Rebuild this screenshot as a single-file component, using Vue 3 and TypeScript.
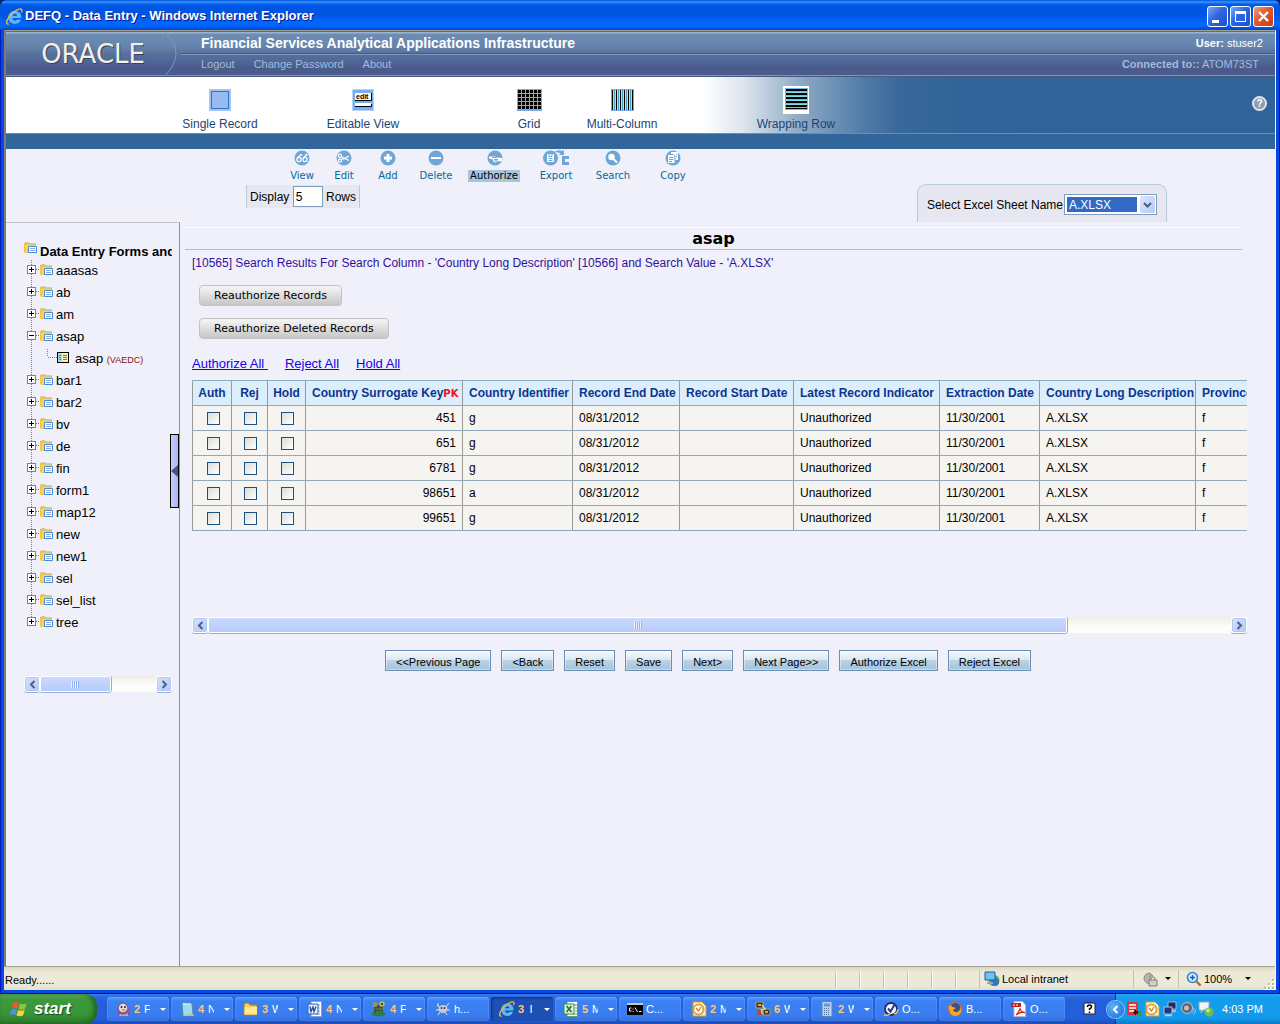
<script setup lang="ts">
import { ref } from 'vue'

interface NavItem { label: string; icon: string }
interface Tool { label: string; icon: string; active?: boolean }
interface Row { key: string; id: string; end: string; start: string; status: string; extracted: string; description: string; province: string }
interface Task { icon: string; count?: string; text: string; active?: boolean }
interface TreeNode { name: string; child?: string; access?: string }

const navItems: NavItem[] = [
  { label: 'Single Record', icon: 'nav-single' },
  { label: 'Editable View', icon: 'nav-edit' },
  { label: 'Grid', icon: 'nav-grid' },
  { label: 'Multi-Column', icon: 'nav-columns' },
  { label: 'Wrapping Row', icon: 'nav-rows' },
]

const tools: Tool[] = [
  { label: 'View', icon: 'tool-view' },
  { label: 'Edit', icon: 'tool-edit' },
  { label: 'Add', icon: 'tool-add' },
  { label: 'Delete', icon: 'tool-delete' },
  { label: 'Authorize', icon: 'tool-authorize', active: true },
  { label: 'Export', icon: 'tool-export' },
  { label: 'Search', icon: 'tool-search' },
  { label: 'Copy', icon: 'tool-copy' },
]

const tree: TreeNode[] = [
  { name: 'aaasas' }, { name: 'ab' }, { name: 'am' },
  { name: 'asap', child: 'asap', access: '(VAEDC)' },
  { name: 'bar1' }, { name: 'bar2' }, { name: 'bv' }, { name: 'de' }, { name: 'fin' }, { name: 'form1' },
  { name: 'map12' }, { name: 'new' }, { name: 'new1' }, { name: 'sel' }, { name: 'sel_list' }, { name: 'tree' },
]

const columnWidths = [39, 36, 38, 157, 110, 107, 114, 146, 100, 156, 110]
const marks = ['Auth', 'Rej', 'Hold']
const headers = [
  'Country Identifier', 'Record End Date', 'Record Start Date', 'Latest Record Indicator',
  'Extraction Date', 'Country Long Description', 'Province',
]

const makeRow = (key: string, id: string): Row => ({
  key, id, end: '08/31/2012', start: '', status: 'Unauthorized',
  extracted: '11/30/2001', description: 'A.XLSX', province: 'f',
})
const rows: Row[] = [makeRow('451', 'g'), makeRow('651', 'g'), makeRow('6781', 'g'), makeRow('98651', 'a'), makeRow('99651', 'g')]

const actions = ['<<Previous Page', '<Back', 'Reset', 'Save', 'Next>', 'Next Page>>', 'Authorize Excel', 'Reject Excel']

const tasks: Task[] = [
  { icon: 'app-pidgin', count: '2', text: 'F' },
  { icon: 'app-notes', count: '4', text: 'N' },
  { icon: 'app-folder', count: '3', text: 'W' },
  { icon: 'app-word', count: '4', text: 'N' },
  { icon: 'app-toad', count: '4', text: 'F' },
  { icon: 'app-bug', text: 'h...' },
  { icon: 'app-ie', count: '3', text: 'I', active: true },
  { icon: 'app-excel', count: '5', text: 'M' },
  { icon: 'app-cmd', text: 'C...' },
  { icon: 'app-outlook', count: '2', text: 'M' },
  { icon: 'app-putty', count: '6', text: 'W' },
  { icon: 'app-calc', count: '2', text: 'W' },
  { icon: 'app-check', text: 'O...' },
  { icon: 'app-firefox', text: 'B...' },
  { icon: 'app-pdf', text: 'O...' },
]
const tray = ['tray-db', 'app-outlook', 'tray-net', 'tray-sound', 'tray-chat']

const rowCount = ref('5')
const sheet = ref('A.XLSX')
</script>

<template>
  <svg class="sprite" aria-hidden="true">
    <symbol id="nav-single" viewBox="0 0 22 22"><rect width="22" height="22" fill="#a5c6f2" /><rect x="2.500" y="2.500" width="17" height="17" fill="#9abbef" stroke="#2a72cc" /></symbol>
    <symbol id="nav-edit" viewBox="0 0 22 22"><rect width="22" height="22" fill="#b7d3fa" /><rect x="1" y="1" width="20" height="20" fill="#79acf2" /><path d="M3 4h16v8H3z" fill="#fff" /><path d="M3 11.500h16.500V4" fill="none" stroke="#000" /><text x="4" y="10" font-family="Liberation Sans" font-size="7" font-weight="bold" fill="#000">edit</text><path d="M3 14h16v3H3z" fill="#fff" /><path d="M3 17.500h16.500V15" stroke="#000" fill="none" /></symbol>
    <symbol id="nav-grid" viewBox="0 0 25 22"><rect width="25" height="22" fill="#78aaf0" /><path d="M1 2.500h23M1 6.500h23M1 10.500h23M1 14.500h23M1 18.500h23" stroke="#000" stroke-width="3" stroke-dasharray="3 1" /></symbol>
    <symbol id="nav-columns" viewBox="0 0 23 22"><rect width="23" height="22" fill="#78aaf0" /><rect x="1" y="1" width="21" height="20" fill="#8ff0f4" /><path d="M1.500 1v20M5.500 1v20M9.500 1v20M13.500 1v20M17.500 1v20M21.500 1v20" stroke="#000" /><path d="M3.500 1v20M7.500 1v20M11.500 1v20M15.500 1v20M19.500 1v20" stroke="#4b9fc0" /></symbol>
    <symbol id="nav-rows" viewBox="0 0 26 28"><rect width="26" height="28" fill="#fff" /><rect x="2" y="2" width="23" height="22" fill="#78b4f0" /><path d="M3 4h21M3 8h21M3 12h21M3 16h21M3 20h21" stroke="#000" stroke-width="2" /><path d="M3 22.500h21" stroke="#000" /><path d="M3 6.500h21M3 10.500h21M3 14.500h21M3 18.500h21" stroke="#79e0f2" /></symbol>

    <symbol id="tool-view" viewBox="0 0 28 16"><circle cx="14" cy="8" r="7.500" fill="#6fa6d6" /><g fill="none" stroke="#fff" stroke-width="1.200"><circle cx="11" cy="9.500" r="2.200" /><circle cx="17" cy="9.500" r="2.200" /><path d="M9 8.500l4-4 1 1M15.500 8l3-3.500 1 1" /></g></symbol>
    <symbol id="tool-edit" viewBox="0 0 28 16"><circle cx="14" cy="8" r="7.500" fill="#6fa6d6" /><g fill="none" stroke="#fff" stroke-width="1.200"><circle cx="10" cy="5.800" r="1.600" /><circle cx="10" cy="10.500" r="1.600" /><path d="M11.500 6.500l3 2 4.500-2.500M11.500 9.800l3-1.600 4.500 2.300" /></g></symbol>
    <symbol id="tool-add" viewBox="0 0 28 16"><circle cx="14" cy="8" r="7.500" fill="#6fa6d6" /><path d="M14 4v8M10 8h8" stroke="#fff" stroke-width="3" /></symbol>
    <symbol id="tool-delete" viewBox="0 0 28 16"><circle cx="14" cy="8" r="7.500" fill="#6fa6d6" /><path d="M9 8h10" stroke="#fff" stroke-width="2" /></symbol>
    <symbol id="tool-authorize" viewBox="0 0 28 16"><circle cx="15" cy="8" r="7.500" fill="#6fa6d6" /><path d="M9 6.500h6l3 1 4 .5v3l-4 .5-3 1-2-1v-2l-4-1z" fill="#fff" /><path d="M12 7.500h5M14 9.500h4M14 11h4" stroke="#6fa6d6" /></symbol>
    <symbol id="tool-export" viewBox="0 0 28 16"><circle cx="8.500" cy="8" r="7.500" fill="#6fa6d6" /><path d="M5 4h7v8H5z" fill="#fff" /><path d="M7 4v2.500h3V4M6.500 8.500h4M6.500 10.500h4" stroke="#6fa6d6" fill="none" /><path d="M12 2q5-3 8-1l2-1v5h-5l1.500-1.500Q16 1.500 12 2z" fill="#6fa6d6" /><path d="M20 6h7v3h-4v3h4v3h-7z" fill="#6fa6d6" /></symbol>
    <symbol id="tool-search" viewBox="0 0 28 16"><circle cx="14" cy="8" r="7.500" fill="#6fa6d6" /><circle cx="12.500" cy="7" r="3.200" fill="#fff" /><path d="M14.500 9l3.500 3.500" stroke="#fff" stroke-width="2" /></symbol>
    <symbol id="tool-copy" viewBox="0 0 28 16"><circle cx="14" cy="8" r="7.500" fill="#6fa6d6" /><path d="M12 2h7v8h-7z" fill="#fff" /><path d="M8.500 4.500h6l1.500 1.500v7.500H8.500z" fill="#fff" stroke="#6fa6d6" /><path d="M10 7.500h4.500M10 9.500h4.500M10 11.500h3M17 4.500h1M17 6.500h1" stroke="#6fa6d6" /></symbol>

    <symbol id="folder" viewBox="0 0 14 12"><path d="M0 10V2l1-1.500h3.500l1 1H12V11H1z" fill="#f7c744" /><path d="M.5 2.500L1 1h4l1 1h6" fill="none" stroke="#c0b8a8" /><path d="M2 3h9v7H2z" fill="#fbd55b" /><path d="M4.500 4.500h8v6h-8z" fill="#fff" stroke="#3d8ad8" /><path d="M6 6.500h5M6 8.500h5" stroke="#8fa8d8" /></symbol>

    <symbol id="app-ie" viewBox="0 0 16 16"><path d="M14 10.800H10.300Q9.800 12 8.300 12 6 11.800 6 9.500H14.500Q14.800 3 8.500 2.500 2.500 3 2 8.800 2.500 14.800 8.300 15 12.800 14.800 14 10.800ZM6 7.200Q6.400 5.300 8.300 5.300 10.200 5.400 10.500 7.200Z" fill="#5ab8f4" /><path d="M2.500 15.300Q-1.500 15 2.800 8.500 8 2 13 .8q3-.2 1.500 3.500" fill="none" stroke="#f2b632" stroke-width="1.300" /></symbol>
    <symbol id="app-pidgin" viewBox="0 0 16 16"><path d="M3 14Q1 3 6.500 1.500 13 1 14 8l1 6z" fill="#7d5d92" /><circle cx="8" cy="7" r="4.200" fill="#e6d9e6" /><circle cx="6.500" cy="6" r="1" fill="#222" /><circle cx="10" cy="6" r="1" fill="#222" /><path d="M6 8h5l-2.500 3z" fill="#f09a28" /><path d="M5 13q4 2 8-1v3H4z" fill="#c9a7a0" /></symbol>
    <symbol id="app-notes" viewBox="0 0 16 16"><path d="M3 1.500l10 1 1 11-10 1.500z" fill="#9bdcf0" stroke="#4c8bb4" /><path d="M4 3h8" stroke="#e8f8ff" /><path d="M4 14l10-1 1 2H5z" fill="#e2c05c" /></symbol>
    <symbol id="app-folder" viewBox="0 0 16 16"><path d="M1 4l1-2h4l1 2h7v10H1z" fill="#f5cf59" stroke="#a97a16" /><path d="M1.500 6h12.500v7.500H1.500z" fill="#ffe794" /></symbol>
    <symbol id="app-word" viewBox="0 0 16 16"><path d="M4 .5h10.500v15H4z" fill="#fff" stroke="#7ba0dc" /><path d="M10 4h3M11 7h2M11 10h2M9 13h4" stroke="#7ba0dc" /><path d="M1 3h10v10H1z" fill="#e6eefb" stroke="#2b5fb8" /><path d="M3 5.500l1 5 2-4.500 1 4.500 2-5" stroke="#1d4a9c" stroke-width="1.300" fill="none" /></symbol>
    <symbol id="app-toad" viewBox="0 0 16 16"><ellipse cx="7.500" cy="13" rx="7" ry="2.500" fill="#158c36" /><path d="M3 4h9v8H3z" fill="#4a4d35" /><circle cx="4" cy="3.500" r="2.500" fill="#9a9658" /><circle cx="11" cy="3" r="2.800" fill="#b8bb57" /><circle cx="11" cy="3" r="1" fill="#223" /><path d="M4 8h8M5 11h6" stroke="#32a14e" /></symbol>
    <symbol id="app-bug" viewBox="0 0 16 16"><ellipse cx="8" cy="8" rx="4.500" ry="4" fill="#c5c9d6" /><path d="M2 4l3 3M14 2l-3 4M1 9h4M12 9h3M5 11l-2 3M10 11l2 3M3 2v3" stroke="#e2e4ed" /><circle cx="6.500" cy="7" r="1" fill="#444" /><circle cx="9.500" cy="7" r="1" fill="#444" /></symbol>
    <symbol id="app-excel" viewBox="0 0 16 16"><path d="M4 .5h10.500v15H4z" fill="#fff" stroke="#5da15d" /><path d="M11 4h3M12 7h2M12 10h2M9 13h5" stroke="#5da15d" /><path d="M1 3h10v10H1z" fill="#e9f6e6" stroke="#2c8a3c" /><path d="M3.500 5l5 6M8.500 5l-5 6" stroke="#237a32" stroke-width="1.800" /></symbol>
    <symbol id="app-cmd" viewBox="0 0 16 16"><path d="M0 2h16v12H0z" fill="#000" /><path d="M0 2h16v2H0z" fill="#c8c8d0" /><path d="M4.500 7H2.500v3h2M6 7.500v1M6 10v.8M8 6.500l2.500 4.500M12 10.500h2.500" stroke="#fff" fill="none" /></symbol>
    <symbol id="app-outlook" viewBox="0 0 16 16"><path d="M2 1h9l4 4v10H2z" fill="#fff3cf" stroke="#d89a2a" /><circle cx="7.500" cy="8.500" r="5" fill="#fff" stroke="#e6a22c" stroke-width="2" /><path d="M5 7l2.500 3L10 6" fill="none" stroke="#c77e1a" stroke-width="1.300" /></symbol>
    <symbol id="app-putty" viewBox="0 0 16 16"><path d="M1 1h7v6H1zM8 8h7v6H8z" fill="#3b3b35" stroke="#9e9e8e" /><path d="M3 3h3v2H3zM10 10h3v2h-3z" fill="#e3a13e" /><path d="M7 4l3 4-4 1 2 4" fill="none" stroke="#f3d34a" stroke-width="1.500" /><path d="M2 9h4v5H2z" fill="#b64a35" /></symbol>
    <symbol id="app-calc" viewBox="0 0 16 16"><path d="M3 .5h10v15H3z" fill="#b9d3ee" stroke="#5c82b4" /><path d="M5 2.500h6v3H5z" fill="#5f97d8" /><path d="M5 7.500h6M5 9.500h6M5 11.500h6M5 13.500h6" stroke="#50739c" stroke-dasharray="1 1" /></symbol>
    <symbol id="app-check" viewBox="0 0 16 16"><circle cx="8" cy="8" r="6" fill="#f3f3f8" stroke="#25306e" stroke-width="1.800" /><path d="M5 7.500l2.500 3L12 3" fill="none" stroke="#24398f" stroke-width="2" /><path d="M1 14q4 1 6-1M11 13q4-1 4-5" fill="none" stroke="#e8c53e" stroke-width="1.500" /></symbol>
    <symbol id="app-firefox" viewBox="0 0 16 16"><circle cx="8" cy="8" r="7" fill="#e2661c" /><circle cx="8.500" cy="6.500" r="4.500" fill="#36518f" /><path d="M1.500 5q3-1 4 1 3 0 3 1.500L6 9q1 3 5 2 3-2 3-6 2 9-5 10-7 0-7.500-10z" fill="#f6a526" /></symbol>
    <symbol id="app-pdf" viewBox="0 0 16 16"><path d="M3 .5h8.500L14.500 4v11.500H3z" fill="#fff" stroke="#b8b8b8" /><path d="M0 2h10v4H0z" fill="#c91f1f" /><path d="M2 4h6" stroke="#fff" stroke-dasharray="2 1" /><path d="M5 14q4-4 4-7 1 5 5 4.500-4-1.500-9 2.500z" fill="none" stroke="#d2201e" stroke-width="1.200" /></symbol>
    <symbol id="tray-db" viewBox="0 0 16 16"><path d="M1 1h11v13H1z" fill="#d9353b" /><path d="M3 4h7M3 7h7M3 10h5" stroke="#fff" stroke-width="1.600" /><path d="M10 8l-3 3.500 3 3v-2h4v-2.500h-4z" fill="#1c1c1c" /><path d="M12 10h3v5h-3z" fill="#2f9c3a" /></symbol>
    <symbol id="tray-net" viewBox="0 0 16 16"><path d="M6 1h8v7H6z" fill="#1c2d64" stroke="#a8b4d8" /><path d="M2 6h8v7H2z" fill="#22377c" stroke="#b8c4e4" /><path d="M3 14.500h7M10 10h4" stroke="#c9cfdf" stroke-width="1.500" /></symbol>
    <symbol id="tray-sound" viewBox="0 0 16 16"><circle cx="7" cy="7" r="5.500" fill="#60656f" stroke="#c0c4ce" /><circle cx="6.500" cy="7" r="2.500" fill="#b9bec8" /><path d="M12 12q2-2 2-5M13.500 14q2.500-2.500 2.500-6" fill="none" stroke="#8ac0ff" /></symbol>
    <symbol id="tray-chat" viewBox="0 0 16 16"><path d="M1 1h10v8H5l-2 3V9H1z" fill="#f2f4f6" stroke="#9ba5b0" /><circle cx="11" cy="11" r="4.500" fill="#6fbf45" /><circle cx="10" cy="9.500" r="2" fill="#b8e596" /></symbol>
  </svg>

  <div class="screen">
    <div class="window">
      <header class="titlebar">
        <svg class="title-icon"><use href="#app-ie" /></svg>
        <h1>DEFQ - Data Entry - Windows Internet Explorer</h1>
        <button class="win-btn" aria-label="Minimize"><svg viewBox="0 0 19 19"><path d="M4 13h7v3H4z" fill="#fff" /></svg></button>
        <button class="win-btn" aria-label="Maximize"><svg viewBox="0 0 19 19"><path d="M4.500 4.500h10v10h-10z" fill="none" stroke="#fff" /><path d="M4 5.500h11" stroke="#fff" stroke-width="3" /></svg></button>
        <button class="win-btn close" aria-label="Close"><svg viewBox="0 0 19 19"><path d="M5 5l9 9M14 5l-9 9" stroke="#fff" stroke-width="2.400" /></svg></button>
      </header>

      <div class="client">
        <div class="banner">
          <div class="brand">
            <span>ORACLE</span>
            <svg class="arc" viewBox="0 0 20 46"><path d="M4 1q22 21 0 44" fill="none" stroke="#8098bd" /></svg>
          </div>
          <div class="banner-rows">
            <div class="banner-row">
              <strong class="product">Financial Services Analytical Applications Infrastructure</strong>
              <span class="user"><b>User:</b> stuser2</span>
            </div>
            <div class="banner-row lower">
              <nav class="links"><a href="#">Logout</a><a href="#">Change Password</a><a href="#">About</a></nav>
              <span class="server"><b>Connected to::</b> ATOM73ST</span>
            </div>
          </div>
        </div>

        <nav class="views">
          <div class="view-list">
            <a v-for="item in navItems" :key="item.label" href="#" class="view">
              <span class="view-icon"><svg :class="item.icon"><use :href="'#' + item.icon" /></svg></span>
              <span>{{ item.label }}</span>
            </a>
          </div>
          <button class="help" aria-label="Help">?</button>
        </nav>
        <div class="band"></div>

        <div class="toolbar">
          <div class="tool-side">
            <div class="tools">
              <button v-for="tool in tools" :key="tool.label" class="tool" :class="{ active: tool.active }">
                <svg><use :href="'#' + tool.icon" /></svg>
                <span>{{ tool.label }}</span>
              </button>
            </div>
            <div class="display"><label for="rows">Display</label><input id="rows" v-model="rowCount" type="text"><span>Rows</span></div>
          </div>
          <div class="sheet">
            <label for="sheet">Select Excel Sheet Name</label>
            <span class="select-wrap">
              <select id="sheet" v-model="sheet"><option>A.XLSX</option></select>
              <span class="drop"><svg viewBox="0 0 9 6"><path d="M1 1l3.500 3.500L8 1" fill="none" stroke="#4d6185" stroke-width="2" /></svg></span>
            </span>
          </div>
        </div>

        <div class="body">
          <aside class="side">
            <div class="tree">
              <div class="tree-head"><svg class="folder"><use href="#folder" /></svg><strong>Data Entry Forms and</strong></div>
              <ul>
                <template v-for="(node, i) in tree" :key="node.name">
                  <li>
                    <button class="toggle" :aria-label="'Toggle ' + node.name">
                      <svg viewBox="0 0 15 22">
                        <path :d="i === tree.length - 1 ? 'M6.500 0v6' : 'M6.500 0v22'" class="dots" />
                        <path d="M11 9.500h4" class="dots" />
                        <rect x="2.500" y="5.500" width="8" height="8" fill="#fff" stroke="#808080" />
                        <path :d="node.child ? 'M4 9.500h5' : 'M4 9.500h5M6.500 7v5'" stroke="#000" />
                      </svg>
                    </button>
                    <svg class="folder"><use href="#folder" /></svg>
                    <a href="#">{{ node.name }}</a>
                  </li>
                  <li v-if="node.child">
                    <svg class="branch" viewBox="0 0 46 22"><path d="M6.500 0v22M22.500 1v8" class="dots" /><path d="M23 9.500h9" class="dots" /><rect x="32.500" y="4.500" width="11" height="10" fill="#fdf3a8" stroke="#000" /><path d="M33 5h4v9h-4z" fill="#9adfe8" /><path d="M34 7.500h2M38 7.500h4M34 9.500h2M38 9.500h4M34 11.500h2M38 11.500h4" stroke="#77776a" /></svg>
                    <a href="#" class="leaf">{{ node.child }} <small>{{ node.access }}</small></a>
                  </li>
                </template>
              </ul>
            </div>
            <div class="scrollbar side-scroll">
              <button aria-label="Scroll left"><svg viewBox="0 0 7 9"><path d="M5.500 1L2 4.500 5.500 8" /></svg></button>
              <div class="track"><div class="thumb"><i></i></div></div>
              <button aria-label="Scroll right"><svg viewBox="0 0 7 9"><path d="M1.500 1L5 4.500 1.500 8" /></svg></button>
            </div>
            <button class="splitter" aria-label="Collapse panel"><svg viewBox="0 0 7 12"><path d="M7 0v12L0 6z" fill="#4b5280" /></svg></button>
          </aside>

          <main class="main">
            <h2>asap</h2>
            <div class="content">
              <p class="message">[10565] Search Results For Search Column - 'Country Long Description' [10566] and Search Value - 'A.XLSX'</p>
              <div class="reauth">
                <button>Reauthorize Records</button>
                <button>Reauthorize Deleted Records</button>
              </div>
              <div class="bulk"><a href="#">Authorize All&nbsp;</a><a href="#">Reject All</a><a href="#">Hold All</a></div>
              <div class="table-wrap">
                <table>
                  <colgroup><col v-for="(w, i) in columnWidths" :key="i" :style="{ width: w + 'px' }"></colgroup>
                  <thead>
                    <tr>
                      <th v-for="mark in marks" :key="mark" class="mark">{{ mark }}</th>
                      <th>Country Surrogate Key<span class="pk">PK</span></th>
                      <th v-for="h in headers" :key="h">{{ h }}</th>
                    </tr>
                  </thead>
                  <tbody>
                    <tr v-for="row in rows" :key="row.key">
                      <td v-for="mark in marks" :key="mark" class="mark"><input type="checkbox" :aria-label="mark + ' ' + row.key"></td>
                      <td class="num">{{ row.key }}</td>
                      <td>{{ row.id }}</td>
                      <td>{{ row.end }}</td>
                      <td>{{ row.start }}</td>
                      <td>{{ row.status }}</td>
                      <td>{{ row.extracted }}</td>
                      <td>{{ row.description }}</td>
                      <td>{{ row.province }}</td>
                    </tr>
                  </tbody>
                </table>
              </div>
              <div class="scrollbar main-scroll">
                <button aria-label="Scroll left"><svg viewBox="0 0 7 9"><path d="M5.500 1L2 4.500 5.500 8" /></svg></button>
                <div class="track"><div class="thumb"><i></i></div></div>
                <button aria-label="Scroll right"><svg viewBox="0 0 7 9"><path d="M1.500 1L5 4.500 1.500 8" /></svg></button>
              </div>
              <div class="actions"><button v-for="a in actions" :key="a">{{ a }}</button></div>
            </div>
          </main>
        </div>

        <footer class="status">
          <span class="ready">Ready......</span>
          <i v-for="n in 6" :key="n" class="cell"></i>
          <span class="zone">
            <svg viewBox="0 0 16 16"><circle cx="10" cy="9.500" r="5.500" fill="#4fae50" /><circle cx="11" cy="11" r="4" fill="#2f78c8" /><path d="M1 1h10v8H1z" fill="#6fc3f4" stroke="#31559a" /><path d="M3 11h6v2H3z" fill="#9aa6b8" /></svg>
            Local intranet
          </span>
          <span class="protect">
            <svg viewBox="0 0 16 16"><path d="M7 13Q1 12 1 7q1-5 6-5l3 3H7v4z" fill="#b4b4ac" stroke="#8c8c86" /><path d="M6 9h8v6H6z" fill="#d0cfc6" stroke="#7f7f78" /><path d="M8 9V7q2-2.500 4 0v2" fill="none" stroke="#7f7f78" /></svg>
            <b class="caret"></b>
          </span>
          <span class="zoom">
            <svg viewBox="0 0 16 16"><path d="M9.500 9.500l5 5" stroke="#9a7440" stroke-width="2.400" /><circle cx="6.500" cy="6.500" r="5" fill="#d3ecff" stroke="#3a7fd0" stroke-width="1.600" /><path d="M6.500 4v5M4 6.500h5" stroke="#1c5fc0" stroke-width="1.500" /></svg>
            100%
            <b class="caret"></b>
          </span>
          <svg class="grip" viewBox="0 0 11 11"><path d="M8 0h3v3H8zM4 4h3v3H4zM8 4h3v3H8zM0 8h3v3H0zM4 8h3v3H4zM8 8h3v3H8z" fill="#fff" /><path d="M8 0h2v2H8zM4 4h2v2H4zM8 4h2v2H8zM0 8h2v2H0zM4 8h2v2H4zM8 8h2v2H8z" fill="#b8b4a0" /></svg>
        </footer>
      </div>
    </div>

    <div class="taskbar">
      <button class="start">
        <svg viewBox="0 0 20 20"><path d="M4 4q3-2 6 0L8.500 9.500q-3-1.500-6 0z" fill="#f0562b" /><path d="M11 4.500q3 1.500 6.500 0L16 10q-3 1.500-6.500 0z" fill="#8cc83c" /><path d="M2.200 10.500q3-1.500 6 0L6.500 16q-3-1.500-6 0z" fill="#4b8ff0" /><path d="M9.200 11q3 1.500 6.500 0L14 16.500q-3 1.500-6.500 0z" fill="#fbd136" /></svg>
        start
      </button>
      <div class="tasks">
        <button v-for="(task, i) in tasks" :key="i" class="task" :class="{ active: task.active }">
          <svg><use :href="'#' + task.icon" /></svg>
          <b v-if="task.count">{{ task.count }}</b>
          <span :class="{ clip: task.count }">{{ task.text }}</span>
          <i v-if="task.count" class="caret"></i>
        </button>
      </div>
      <svg class="ask" viewBox="0 0 14 14"><path d="M1 1h11v11H1z" fill="#fff" stroke="#222" /><path d="M4.500 5q0-2 2-2t2 1.800q0 1-2 2.200v1M6.500 9.500v1.500" fill="none" stroke="#000" stroke-width="1.500" /></svg>
      <div class="tray">
        <button class="expand" aria-label="Show hidden icons"><svg viewBox="0 0 7 9"><path d="M5.500 1L2 4.500 5.500 8" fill="none" stroke="#fff" stroke-width="2" /></svg></button>
        <svg v-for="icon in tray" :key="icon"><use :href="'#' + icon" /></svg>
        <time>4:03 PM</time>
      </div>
    </div>
  </div>
</template>

<style>
body { background: #0a246a; }
</style>

<style scoped>
* { box-sizing: border-box; }
.sprite { position: absolute; width: 0; height: 0; }
button { font: inherit; padding: 0; border: 0; background: none; color: inherit; }
svg { display: block; flex: none; }
a { color: inherit; text-decoration: none; }

.screen { min-height: 100vh; display: flex; flex-direction: column; font: 12px/16px "Liberation Sans", Arial, sans-serif; color: #000; overflow: hidden; }
.window { flex: 1; display: flex; flex-direction: column; background: #0648e0; padding: 0 4px 4px; border-radius: 7px 7px 0 0; box-shadow: inset 1px 0 #0018c0, inset -1px -1px #0010a0; }

.titlebar { height: 30px; margin: 0 -4px; padding: 2px 6px 0; display: flex; align-items: center; gap: 2px; border-radius: 7px 7px 0 0; background: linear-gradient(#0050dc 0, #3c96fc 2px, #0060ee 4px, #0054e0 8px, #0054e4 15px, #0066fc 22px, #0066fc 26px, #0044d0 30px); }
.title-icon { width: 17px; height: 17px; }
.titlebar h1 { flex: 1; margin: 0; color: #fff; font-size: 13px; line-height: 18px; font-weight: bold; text-shadow: 1px 1px #0a1883; }
.win-btn { width: 21px; height: 21px; border: 1px solid #fff; border-radius: 3px; background: linear-gradient(135deg, #7da4f4, #2f65e0 45%, #1b50cc); }
.win-btn.close { background: linear-gradient(135deg, #f0a088, #e25530 45%, #c83c14); }
.win-btn svg { width: 19px; height: 19px; }

.client { flex: 1; display: flex; flex-direction: column; background: #eff0f9; border-left: 2px solid #7d7d76; border-right: 1px solid #f7f5e6; border-top: 1px solid #a39f8c; }

.banner { height: 46px; display: flex; border-top: 1px solid #5c6c7c; border-bottom: 1px solid #47587f; background: linear-gradient(#9db3d2 0, #9db3d2 1px, #6d8db5 2px, #6585ae 14px, #577099 22px, #50699a 28px, #4a5b8c 36px, #4a5b8c 43px, #8095bd 43px); color: #fff; }
.brand { width: 175px; display: flex; align-items: center; justify-content: flex-end; gap: 5px; }
.brand span { color: #f2f0e8; font: 26px/44px "DejaVu Sans", Verdana, sans-serif; padding-right: 11px; text-shadow: 1px 1px #3a4257; }
.brand .arc { width: 20px; height: 46px; }
.banner-rows { flex: 1; }
.banner-row { height: 22px; padding: 0 12px 0 20px; display: flex; justify-content: space-between; align-items: center; font-size: 11px; }
.banner-row.lower { border-top: 1px solid #7f96bd; box-shadow: 0 -1px #435a87; color: #a2bbdc; padding: 0 16px 4px 20px; }
.product { font-size: 14px; }
.links { display: flex; gap: 19px; }

.views { height: 57px; display: flex; justify-content: space-between; padding: 7px 8px 0 174px; border-bottom: 1px solid #5d90c6; background: linear-gradient(90deg, #fff 696px, #dfe6ee 736px, #8ba8c4 796px, #547ea9 854px, #3a699b 890px, #316498 950px, #2f6399); color: #1c4478; }
.view-list { display: grid; grid-template-columns: 143px 166px 93px 174px 80px; }
.view { width: 80px; display: flex; flex-direction: column; align-items: center; white-space: nowrap; }
.view-icon { height: 32px; display: flex; align-items: center; justify-content: center; }
.view-icon svg { width: 22px; height: 22px; }
.view-icon svg.nav-grid { width: 25px; }
.view-icon svg.nav-columns { width: 23px; }
.view-icon svg.nav-rows { width: 26px; height: 28px; }
.help { width: 15px; height: 15px; margin-top: 12px; border: 2px solid #dfe5ea; border-radius: 50%; background: #8a9fb4; color: #fff; font: bold 10px/11px "Liberation Sans", Arial, sans-serif; }
.band { height: 15px; background: #32669a; }

.toolbar { height: 73px; display: flex; justify-content: space-between; align-items: flex-end; padding-right: 108px; }
.tool-side { align-self: flex-start; padding-top: 1px; }
.tools { display: grid; grid-template-columns: 42px 42px 46px 50px 66px 58px 56px 64px; margin-left: 275px; }
.tool { display: flex; flex-direction: column; align-items: center; gap: 4px; color: #066a9c; font: 10px/12px "DejaVu Sans", Verdana, sans-serif; }
.tool svg { width: 28px; height: 16px; }
.tool span { padding: 0 2px; }
.tool.active span { background: #a5c6de; color: #000; }
.display { margin: 3px 0 0 240px; width: 114px; height: 23px; padding: 0 3px; display: flex; align-items: center; justify-content: space-between; background: #e6e7f0; border-left: 1px solid #b5cbdc; border-right: 1px solid #b5cbdc; }
.display input { width: 30px; height: 21px; padding: 0 2px; border: 1px solid #7f9db9; background: #fff; font: inherit; }
.sheet { height: 38px; padding: 2px 9px 0; display: flex; align-items: center; gap: 1px; background: #e6e7f0; border: 1px solid #b5cbdc; border-bottom: 0; border-radius: 9px 9px 0 0; }
.select-wrap { position: relative; }
.select-wrap select { appearance: none; display: block; width: 93px; height: 21px; padding: 0 4px; border: 1px solid #7f9db9; border-radius: 0; color: #fff; font: inherit; background: linear-gradient(#316ac5, #316ac5) 2px 2px / 70px 15px no-repeat #fff; }
.drop { position: absolute; top: 2px; right: 2px; width: 15px; height: 17px; display: flex; align-items: center; justify-content: center; border-radius: 2px; background: linear-gradient(135deg, #dbe5fd, #b4cbf8); pointer-events: none; }
.drop svg { width: 9px; height: 6px; }

.body { flex: 1; display: flex; }
.side { position: relative; width: 174px; flex: none; padding: 19px 7px 0 18px; border-top: 1px solid #c4c4c8; border-right: 1px solid #8e8e96; }
.tree { overflow: hidden; font-size: 13px; white-space: nowrap; }
.tree-head { height: 18px; display: flex; gap: 2px; }
.tree-head strong { line-height: 19px; }
.folder { width: 14px; height: 12px; }
.tree ul { list-style: none; margin: 0; padding: 0 0 0 1px; }
.tree li { height: 22px; display: flex; line-height: 22px; }
.tree li .folder { margin-top: 4px; }
.tree li a { margin-left: 2px; }
.toggle svg { width: 15px; height: 22px; }
.dots { stroke: #808080; stroke-dasharray: 1 1; fill: none; }
.branch { width: 46px; height: 22px; }
.tree li a.leaf { margin-left: 4px; }
.leaf small { font-size: 9px; color: #8a1010; }
.splitter { position: absolute; right: 0; top: 211px; width: 9px; height: 74px; display: flex; align-items: center; justify-content: center; border: 1px solid #000; background: linear-gradient(90deg, #c4cdfb, #aab4f5); }
.splitter svg { width: 7px; height: 12px; }

.scrollbar { height: 16px; display: flex; background: linear-gradient(#eeede5, #fdfdfa 60%); }
.scrollbar button { width: 16px; height: 16px; flex: none; display: flex; align-items: center; justify-content: center; border: 1px solid #fff; border-radius: 3px; background: linear-gradient(135deg, #d6e2fd, #b3c9f8); box-shadow: inset 0 0 0 1px #b4c8f2, 0 1px #8fb0e0; }
.scrollbar svg { width: 7px; height: 9px; }
.scrollbar path { fill: none; stroke: #4d6185; stroke-width: 2; }
.track { flex: 1; }
.thumb { height: 16px; display: flex; align-items: center; justify-content: center; border: 1px solid #fff; border-radius: 2px; background: linear-gradient(#cbdafd, #b5cbfa); box-shadow: 1px 0 #8fb0e0, 0 1px #8fb0e0; }
.thumb i { width: 8px; height: 7px; background: repeating-linear-gradient(90deg, #eef4fe 0 1px, #8cb0f8 1px 2px); }
.side-scroll { margin-top: 42px; }
.side-scroll .thumb { width: 61%; }
.main-scroll { margin-top: 86px; }
.main-scroll .thumb { width: 84%; }

.main { flex: 1; min-width: 0; padding: 5px 28px 0 5px; }
.main h2 { margin: 0 5px 0 0; height: 23px; border-top: 1px solid #fff; border-bottom: 1px solid #bcbcc0; text-align: center; font: bold 16px/22px "DejaVu Sans", Verdana, sans-serif; }
.content { margin-left: 7px; }
.message { margin: 5px 0 0; color: #32109c; }
.reauth { margin: 14px 0 0 7px; display: flex; flex-direction: column; align-items: flex-start; gap: 12px; }
.reauth button { height: 21px; padding: 0 14px; border: 1px solid #c2c2c4; border-radius: 4px; background: linear-gradient(#f6f6f6, #dedede 50%, #c6c6c6); font: 11px/18px "DejaVu Sans", Verdana, sans-serif; }
.bulk { margin-top: 16px; display: flex; gap: 17px; font-size: 13px; line-height: 18px; color: #1800e8; }
.bulk a { text-decoration: underline; }
.table-wrap { margin-top: 7px; overflow: hidden; }
table { width: 1113px; table-layout: fixed; border-collapse: collapse; }
th, td { height: 25px; padding: 0 6px; border: 1px solid #8fa8bd; border-left-color: #999; border-right-color: #999; text-align: left; white-space: nowrap; overflow: hidden; }
th { background: #dceefc; color: #0b3590; }
td { background: #f5f4f0; }
.mark { padding: 0; text-align: center; }
.num { text-align: right; }
.pk { color: #f01020; font-size: 10px; font-family: "DejaVu Sans", Verdana, sans-serif; }
td.mark { padding-left: 2px; }
input[type="checkbox"] { appearance: none; display: block; width: 13px; height: 13px; margin: 1px auto 0; border: 1px solid #1c5180; background: linear-gradient(135deg, #dcdcd7, #fff); }
.actions { margin-top: 17px; padding-right: 23px; display: flex; justify-content: center; gap: 10px; }
.actions button { height: 21px; padding: 2px 10px 0; border: 1px solid #6a8db4; background: linear-gradient(#f6fafd, #dbe8f2 45%, #bcd3e4 50%, #a4c3da); font-size: 11px; line-height: 16px; white-space: nowrap; box-shadow: inset 0 0 0 1px #ffffff60; }

.status { height: 24px; display: flex; align-items: center; border-top: 1px solid #a8a594; margin-left: -2px; background: linear-gradient(#d9d6c6, #ece9d8 5px, #ece9d8 18px, #e2dfcd); font-size: 11px; }
.status svg { width: 16px; height: 16px; }
.ready { flex: 1; padding: 3px 0 0 1px; }
.cell { width: 24px; height: 18px; border-left: 1px solid #c5c2b0; box-shadow: inset 1px 0 #fff; }
.status > span { display: flex; align-items: center; gap: 2px; white-space: nowrap; }
.zone { width: 154px; height: 18px; padding-left: 4px; border-left: 1px solid #c5c2b0; }
.protect { width: 45px; height: 18px; padding-left: 9px; border-left: 1px solid #c5c2b0; }
.zoom { width: 86px; height: 18px; padding: 0 13px 0 7px; border-left: 1px solid #c5c2b0; }
.zoom .caret { margin-left: auto; }
.status .grip { width: 11px; height: 11px; align-self: flex-end; }
.caret { width: 0; height: 0; flex: none; border: 3px solid transparent; border-top-color: currentColor; border-bottom: 0; }
.protect .caret { margin-left: 4px; }

.taskbar { height: 30px; display: flex; align-items: center; color: #fff; background: linear-gradient(#3a7de8 0, #2b68e0 3px, #245edb 8px, #2460dc 24px, #1c4cb8); font-size: 11px; }
.start { width: 97px; height: 30px; padding: 0 0 0 9px; display: flex; align-items: center; gap: 5px; border-radius: 0 12px 12px 0; background: linear-gradient(#6cb868 0, #3c9a3c 5px, #389438 20px, #2c7a2c); box-shadow: inset -3px 0 5px #1e6020; font: italic bold 17px/20px "Liberation Sans", Arial, sans-serif; text-shadow: 1px 1px 1px #1c4a1c; }
.start svg { width: 20px; height: 20px; }
.tasks { flex: 1; min-width: 0; display: flex; gap: 2px; padding-left: 10px; }
.task { flex: 0 1 62px; min-width: 0; height: 24px; padding: 0 3px 0 8px; display: flex; align-items: center; border-radius: 3px; background: linear-gradient(#5a9bfa, #3c81f3 4px, #3a7cf0 20px, #2f6ad8); box-shadow: inset 0 0 0 1px #ffffff18; overflow: hidden; white-space: nowrap; }
.task.active { background: #1e50b4; box-shadow: inset 1px 1px 2px #0c2f80; }
.task svg { width: 16px; height: 16px; margin-right: 3px; }
.task b { color: #fcc878; width: 10px; text-align: left; }
.task .clip { width: 6px; overflow: hidden; }
.task .caret { margin-left: auto; }
.ask { width: 14px; height: 14px; margin-right: 18px; }
.tray { width: 165px; height: 30px; padding-right: 17px; display: flex; align-items: center; gap: 2px; background: linear-gradient(#2aa8f2 0, #149ced 4px, #129bec 24px, #0e78c8); box-shadow: inset 1px 0 #0b3f8c; }
.tray svg { width: 16px; height: 16px; }
.tray .expand { width: 17px; height: 17px; margin-left: -8px; display: flex; align-items: center; justify-content: center; border-radius: 50%; background: radial-gradient(circle at 35% 35%, #5cb4fa, #1c66d8); box-shadow: 0 0 0 1px #8ccaf8; }
.tray .expand svg { width: 7px; height: 9px; }
.tray time { margin-left: auto; white-space: nowrap; }
</style>
